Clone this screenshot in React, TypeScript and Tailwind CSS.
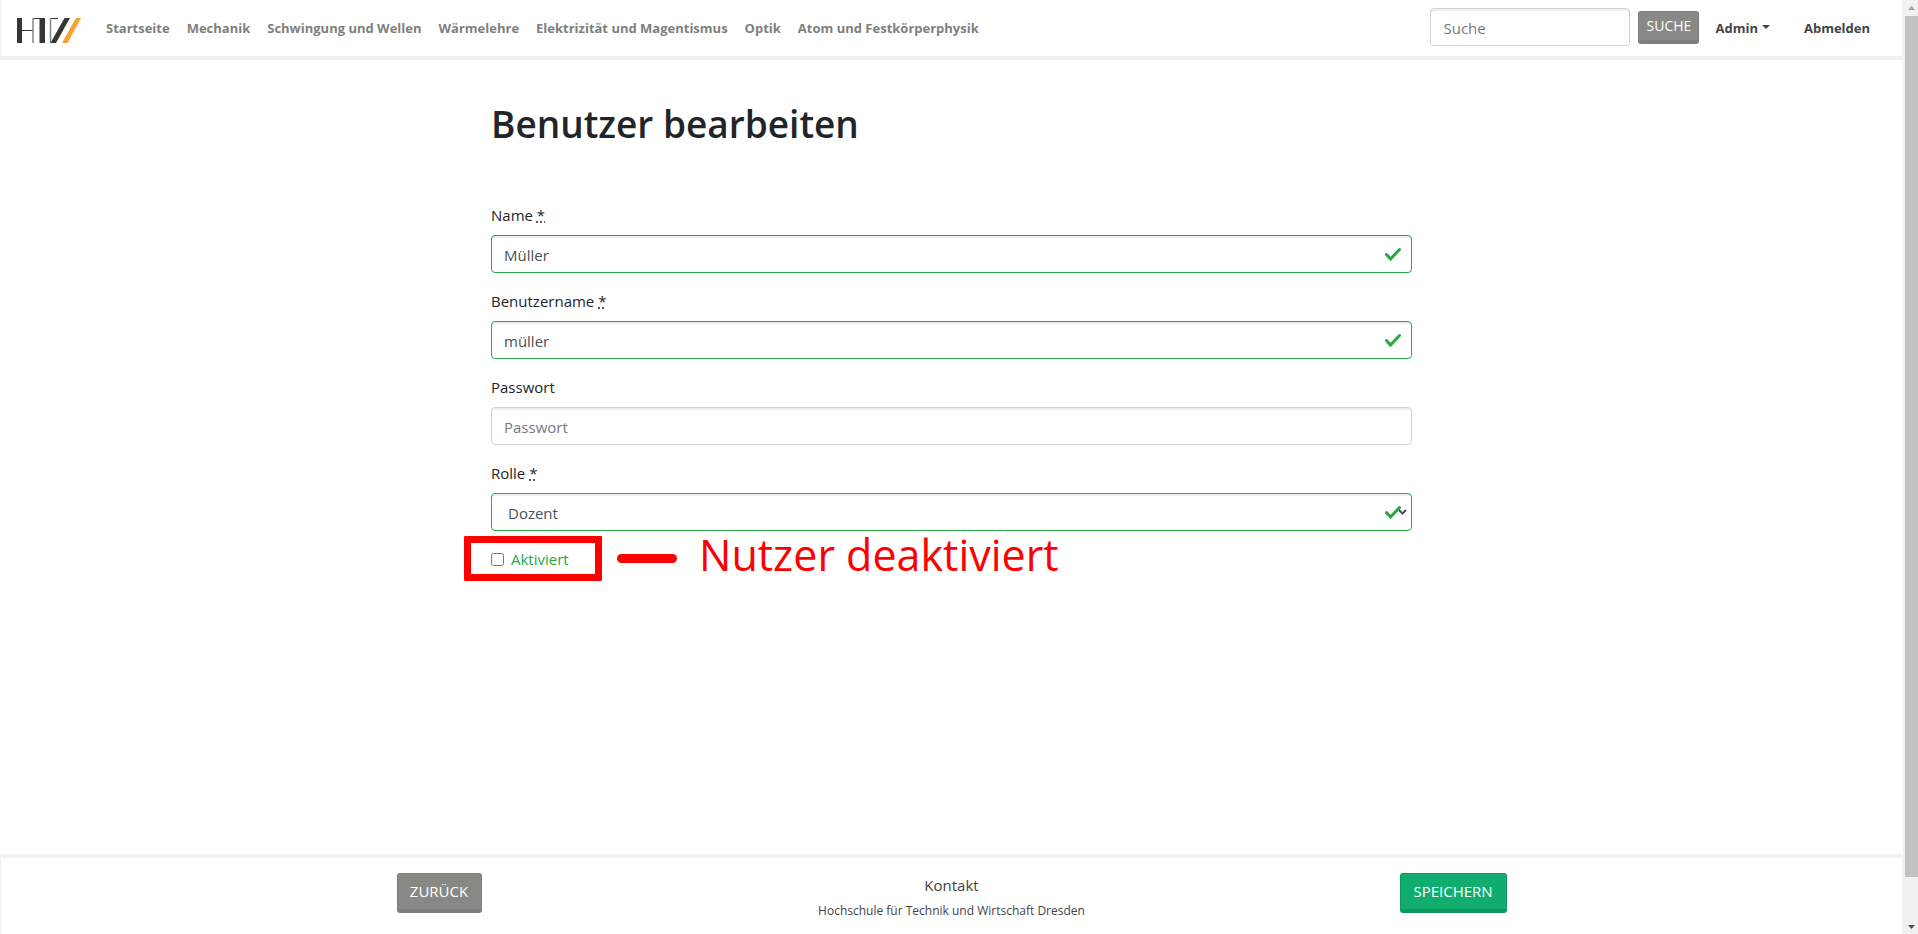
import { ReactNode } from "react";

const topics = [
  "Startseite",
  "Mechanik",
  "Schwingung und Wellen",
  "Wärmelehre",
  "Elektrizität und Magentismus",
  "Optik",
  "Atom und Festkörperphysik",
];

const control =
  "h-[38px] w-full rounded border bg-white px-3 pt-[2px] text-[15px] text-[#495057] shadow-[inset_0_2px_0_#ededed] outline-none placeholder:text-[#75797d]";

function Logo() {
  return (
    <svg width="64" height="25" viewBox="0 0 64 25" aria-label="HTW">
      <path d="M0 0h5v25H0zM22.500 0h5.500v25h-5.500z" fill="#363636" />
      <path d="M5 12.500h11M16 0.500h7M33 0.500h8" stroke="#363636" strokeWidth="1" />
      <path d="M16 0v25M33.500 0v25" stroke="#888" strokeWidth="1.500" />
      <path d="M47.500 0H53L39 25h-5.500z" fill="#363636" />
      <path d="M59 0h5L50.500 25H45z" fill="#faa030" />
    </svg>
  );
}

function Check() {
  return (
    <svg className="pointer-events-none absolute top-3 right-[11px]" width="16" height="15" viewBox="0 0 16 15" aria-hidden="true">
      <path d="M1.500 7.500 5.500 12 14.500 2.500" fill="none" stroke="#28a745" strokeWidth="3" strokeLinecap="round" />
    </svg>
  );
}

function Field({ id, label, required, children }: { id: string; label: string; required?: boolean; children: ReactNode }) {
  return (
    <div>
      <label htmlFor={id} className="mb-2 block text-[15px] leading-6 text-[#212529]">
        {label}
        {required && (
          <>
            {" "}
            <abbr title="Pflichtfeld" className="underline decoration-dotted">*</abbr>
          </>
        )}
      </label>
      <div className="relative">{children}</div>
    </div>
  );
}

export default function App() {
  return (
    <div className="flex min-h-screen bg-white font-['Open_Sans','Noto_Sans',sans-serif] text-[#212529]">
      <div className="flex min-w-0 flex-1 flex-col">
        <header className="flex h-[60px] items-center border-x border-b-4 border-x-[#f1f1f1] border-b-[#f1f1f1] pr-8 pl-4">
          <a href="#start" className="mt-1 mr-[25px]">
            <Logo />
          </a>
          <nav className="flex flex-1 gap-[17px] pt-[2px] text-[13px] font-bold text-[#7f7f7c]">
            {topics.map((t) => (
              <a key={t} href="#thema" className="whitespace-nowrap">{t}</a>
            ))}
          </nav>
          <form className="flex items-center gap-2 pb-[2px]">
            <input aria-label="Suche" placeholder="Suche" className="h-[38px] w-[200px] rounded border border-[#ced4da] px-3 pt-[2px] text-[15px] shadow-[inset_0_2px_0_#ededed] outline-none placeholder:text-[#75797d]" />
            <button type="button" className="h-[33px] w-[61px] rounded-[3px] border border-b-4 border-[#7e7e7b] bg-[#888885] text-[14px] leading-5 text-white">SUCHE</button>
          </form>
          <nav className="ml-4 flex items-center gap-[34px] pt-[2px] text-[13px] font-bold text-[#444]">
            <a href="#admin" className="flex items-center gap-1">
              Admin
              <svg width="8" height="4" viewBox="0 0 8 4" aria-hidden="true" className="mb-1">
                <path d="M0 0h8L4 4z" fill="#444" />
              </svg>
            </a>
            <a href="#abmelden">Abmelden</a>
          </nav>
        </header>

        <main className="mx-auto w-full max-w-[921px] flex-1 pt-10">
          <h1 className="mb-[55px] text-[37px] leading-[48px] font-semibold">Benutzer bearbeiten</h1>
          <form className="flex flex-col gap-4">
            <Field id="name" label="Name" required>
              <input id="name" defaultValue="Müller" className={`${control} border-[#28a745]`} />
              <Check />
            </Field>
            <Field id="user" label="Benutzername" required>
              <input id="user" defaultValue="müller" className={`${control} border-[#28a745]`} />
              <Check />
            </Field>
            <Field id="pass" label="Passwort">
              <input id="pass" type="password" placeholder="Passwort" className={`${control} border-[#ced4da]`} />
            </Field>
            <Field id="role" label="Rolle" required>
              <select id="role" className={`${control} appearance-none border-[#28a745] pl-4`}>
                <option>Dozent</option>
              </select>
              <Check />
              <svg className="pointer-events-none absolute top-4 right-[5px]" width="9" height="6" viewBox="0 0 9 6" aria-hidden="true">
                <path d="M1 1l3.500 3.500L8 1" fill="none" stroke="#495057" strokeWidth="2" />
              </svg>
            </Field>
            <div className="relative flex h-6 items-center">
              <label className="flex items-center gap-[7px] text-[15px] leading-6 text-[#28a745]">
                <input type="checkbox" className="size-[13px]" />
                Aktiviert
              </label>
              <div className="pointer-events-none absolute top-[-11px] left-[-27px] flex h-[45px] items-center">
                <div className="h-[45px] w-[138px] rounded-[1px] border-[7px] border-[#fe0000]" />
                <div className="ml-[15px] h-[9px] w-[60px] rounded-full bg-[#fe0000]" />
                <div className="ml-[22px] pb-2 text-[43px] leading-[45px] whitespace-nowrap text-[#fe0000]">Nutzer deaktiviert</div>
              </div>
            </div>
          </form>
        </main>

        <footer className="h-20 border-x border-t-4 border-x-[#f1f1f1] border-t-[#f1f1f1]">
          <div className="mx-auto grid max-w-[1140px] grid-cols-3 px-[15px] pt-[15px]">
            <button type="button" className="h-10 w-[85px] rounded-[3px] border border-b-4 border-[#7e7e7b] bg-[#888885] text-[15px] text-white">ZURÜCK</button>
            <div className="text-center text-[#444]">
              <a href="#kontakt" className="block text-[15px] leading-6">Kontakt</a>
              <p className="mt-[2px] text-[12px] leading-6">Hochschule für Technik und Wirtschaft Dresden</p>
            </div>
            <button type="button" className="h-10 w-[107px] justify-self-end rounded-[3px] border border-b-4 border-[#0d985f] bg-[#10ad6f] text-[15px] text-white">SPEICHERN</button>
          </div>
        </footer>
      </div>

      <div className="flex w-[15px] flex-col items-end bg-[#f1f1f1]" aria-hidden="true">
        <div className="flex h-4 w-[13px] items-center justify-center">
          <svg width="7" height="4" viewBox="0 0 7 4"><path d="M0 4h7L3.500 0z" fill="#a3a3a3" /></svg>
        </div>
        <div className="w-[13px] flex-1 bg-[#c1c1c1]" />
        <div className="flex h-[57px] w-[13px] items-end justify-center pb-[5px]">
          <svg width="7" height="4" viewBox="0 0 7 4"><path d="M0 0h7L3.500 4z" fill="#505050" /></svg>
        </div>
      </div>
    </div>
  );
}
